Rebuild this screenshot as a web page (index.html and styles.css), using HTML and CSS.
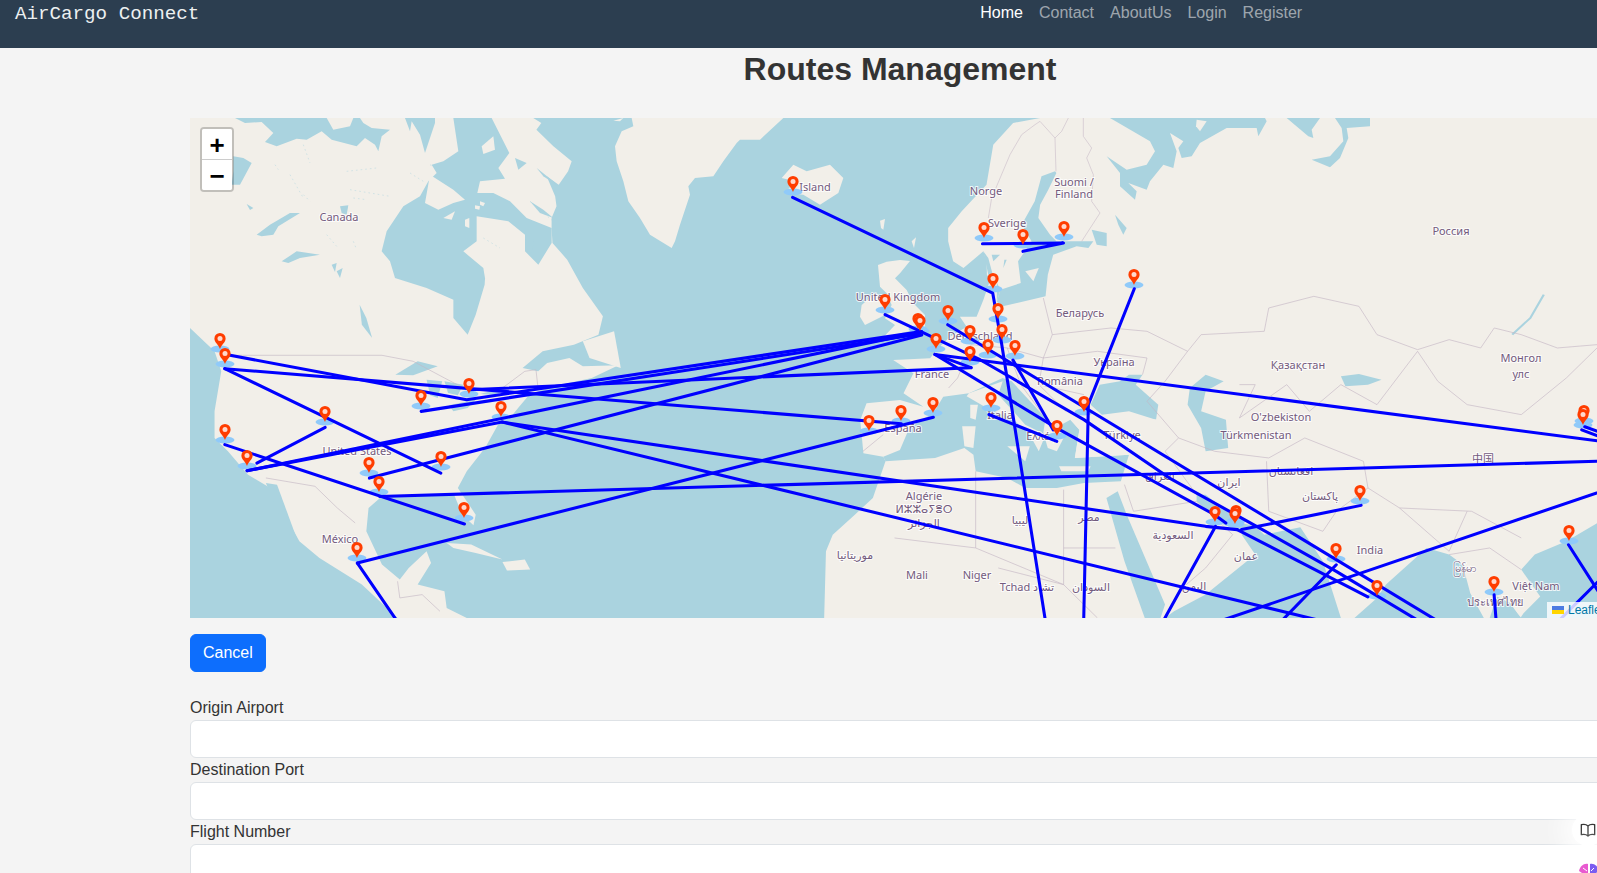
FILE: index.html
```html
<!DOCTYPE html>
<html lang="en">
<head>
  <meta charset="UTF-8">
  <meta name="viewport" content="width=device-width, initial-scale=1.0">
  <link rel="stylesheet" href="styles.css">
  <title>Routes Management</title>
</head>
<body>

  <nav class="navbar">
    <a class="brand" href="#">AirCargo Connect</a>
    <ul class="nav-links">
      <li><a class="active" href="#">Home</a></li>
      <li><a href="#">Contact</a></li>
      <li><a href="#">AboutUs</a></li>
      <li><a href="#">Login</a></li>
      <li><a href="#">Register</a></li>
    </ul>
  </nav>

  <main class="page">
    <h1 class="page-title">Routes Management</h1>

    <div class="map">
      <svg class="map-canvas" width="1420" height="500" viewBox="190 118 1420 500">
        <defs>
          <ellipse id="shadow" cx="0" cy="0" rx="9.5" ry="3.5"/>
          <g id="pin">
            <path d="M0 0C-1.5-4.5-5.6-6.5-5.6-10.5a5.6 5.6 0 0 1 11.2 0C5.6-6.5 1.5-4.5 0 0Z"/>
            <circle class="pin-hole" cx="0" cy="-10.5" r="2.5"/>
          </g>
        </defs>

        <!-- america, traced in 2.24 x 3 units -->
        <g transform="translate(190 118) scale(.4464 .3333)">
          <path class="land" d="M0 0L769 0 787 15 776 35 814 85 855 130 847 160 826 200 799 175 818 235 821 265 810 300 810 330 812 375 845 425 880 510 925 595 915 650 860 680 790 700 745 750 780 760 800 735 850 720 880 745 960 742 900 780 830 800 790 815 760 830 735 870 720 895 690 920 665 980 655 1000 620 1060 600 1110 640 1190 635 1222 610 1190 590 1125 560 1130 430 1135 400 1170 395 1240 430 1340 470 1385 490 1350 530 1300 540 1335 510 1400 570 1420 575 1470 620 1500 465 1500 385 1400 290 1320 245 1270 180 1110 130 1070 85 1000 55 960 55 880 70 760 55 700 0 630Z"/>
          <path class="water" d="M459 480L530 510 590 545 590 600 622 650 640 590 660 500 661 480Z"/>
          <path class="land" d="M880 670L950 640 965 750 895 720Z"/>
          <path class="land" d="M575 1275L630 1280 700 1325 640 1305 590 1290Z"/>
          <path class="land" d="M700 1332L750 1325 762 1355 710 1358Z"/>
          <path class="water" d="M170 1095L195 1100 240 1265 215 1240Z"/>
          <path class="water" d="M460 770L510 730 555 745 500 772Z"/>
          <path class="water" d="M530 785L565 790 555 840 538 832Z"/>
          <path class="water" d="M570 790L612 800 600 832 578 825Z"/>
          <path class="water" d="M580 862L640 845 622 870 590 880Z"/>
          <path class="water" d="M650 828L700 810 690 832Z"/>
          <path class="water" d="M380 560L395 600 408 660 385 620Z"/>
          <g class="borders">
            <path d="M70 712L430 712 500 730 570 780 620 815 700 810 750 760 775 755 780 815"/>
            <path d="M170 1080L280 1105 330 1170 370 1215"/>
            <path d="M465 1390L470 1440 520 1430 560 1480"/>
            <path d="M1425 1300L1525 1290 1568 1240M1525 1290L1530 1170"/>
          </g>
        </g>

        <!-- canadian arctic and north atlantic, traced 3x -->
        <g transform="translate(190 118) scale(.33333)">
          <path class="water" d="M135 0L165 15 215 12 250 45 225 72 260 85 320 62 350 65 395 40 425 65 500 85 525 60 555 80 565 100 575 55 600 35 545 30 520 15 510 0Z"/>
          <path class="land" d="M410 0L490 0 480 25 430 35Z"/>
          <path class="water" d="M645 0L660 40 665 10 690 50 705 105 720 60 735 15 735 0Z"/>
          <path class="water" d="M790 0L905 0 958 105 925 150 945 182 870 190 862 225 910 225 960 250 1010 300 1085 330 1085 375 1045 440 1005 400 1005 350 955 310 860 295 860 370 820 400 880 450 885 480 615 480 600 430 575 400 590 340 640 265 690 235 715 190 740 165 725 140 760 130 805 100Z"/>
          <path class="land" d="M720 170L790 215 825 245 790 255 745 275 705 255Z"/>
          <path class="land" d="M760 300L795 280 785 305Z"/>
          <path class="land" d="M825 305L838 300 838 330 825 325Z"/>
          <path class="land" d="M855 262L870 265 868 275 855 272Z"/>
          <path class="land" d="M870 250L885 255 880 265 870 260Z"/>
          <path class="land" d="M875 85L910 55 915 95 880 108Z"/>
          <path class="water" d="M975 120L1010 135 985 155Z"/>
          <path class="water" d="M1040 150L1090 190 1105 205 1060 175Z"/>
          <path class="water" d="M1020 250L1060 275 1090 300 1050 285Z"/>
          <path class="water" d="M200 350L240 320 300 285 330 285 265 325 250 350 215 355Z"/>
          <path class="water" d="M130 115L160 120 185 135 150 200 125 200 130 160Z"/>
          <path class="water" d="M275 430L320 400 390 410 330 420 295 435Z"/>
          <path class="water" d="M450 265L475 262 470 290 455 285Z"/>
          <path class="water" d="M170 258L190 270 180 276Z"/>
          <path class="water" d="M425 440L440 435 435 462Z"/>
          <path class="water" d="M440 460L458 450 450 480Z"/>
          <path class="water" d="M1005 365L1030 365 1028 405 1010 400Z"/>
          <g class="water-lines">
            <path d="M255 140L265 155M300 170L340 240M470 160L560 150M480 215L600 235M490 240L530 245M340 80L360 135M660 165L700 190M720 140L770 170M410 350L440 385M490 370L500 395M880 360L930 390M1020 250L1090 310M340 230L360 250"/>
          </g>
        </g>

        <g transform="translate(600 118) scale(.33333)">
          <path class="land" d="M95 0L100 25 65 40 45 85 50 130 70 190 85 250 120 300 150 350 215 390 225 370 240 320 270 230 265 205 285 180 340 175 370 130 410 75 420 65 480 65 550 0Z"/>
          <path class="land" d="M545 180L580 140 620 160 690 140 730 180 715 225 660 260 610 230 555 225 585 190Z"/>
          <path class="land" d="M40 8L70 0 60 10Z"/>
          <path class="land" d="M840 308L855 303 850 335 843 330Z"/>
          <path class="land" d="M935 370L948 358 942 390Z"/>
        </g>

        <!-- eurasia and africa, traced in 2.218 x 3 units -->
        <g transform="translate(890 118) scale(.4509 .3333)">
          <path class="land" d="M-146 1500L-142 1300-127 1250-78 1190-38 1140-10 1030-15 1016-59 1006-66 906-52 856 22 846 74 866 30 826 52 766 7 726 89 721 103 696 133 656 170 626 155 596 192 596 207 546 222 486 215 470 214 430 207 400 163 450 140 430 129 370 129 330 159 280 214 200 229 80 273 15 333 0 1600 0 1600 1190 1500 1270 1430 1310 1400 1355 1442 1436 1405 1486 1398 1500 1376 1456 1346 1436 1346 1500 1317 1500 1287 1426 1270 1340 1240 1310 1190 1290 1100 1400 1080 1440 1030 1500 1000 1500 960 1330 910 1228 830 1250 810 1225 780 1250 810 1310 700 1430 630 1480 610 1500Z"/>
          <path class="water" d="M207 400L218 420 228 470 245 515 237 551 237 496 218 470Z"/>
          <path class="water" d="M336 175L366 160 369 165 351 215 333 260 329 300 355 350 369 370 451 370 440 390 414 385 362 410 350 470 345 535 250 565 237 551 245 515 290 495 284 430 314 370 292 320 321 250Z"/>
          <path class="land" d="M300 460L330 450 318 490Z"/>
          <path class="water" d="M445 860L465 800 510 790 530 770 560 770 545 800 595 860 590 905 530 880 470 890Z"/>
          <path class="water" d="M665 810L700 770 740 790 700 820 690 880 745 905 750 990 700 1000 690 930 660 860Z"/>
          <path class="water" d="M1000 775L1040 768 1090 785 1060 800 1010 805Z"/>
          <path class="water" d="M1330 1500L1345 1440 1375 1460 1400 1500Z"/>
          <path class="water" d="M118 836L175 826 250 780 270 790 345 900 380 920 400 905 420 935 410 1020 530 1010 512 1090 430 1095 370 1110 300 1110 260 1080 190 1060 185 1010 165 990 100 1020-10 1030-15 1016 22 996 44 926 96 886Z"/>
          <path class="water" d="M480 1140L505 1120 525 1190 610 1460 600 1500 565 1500 520 1330Z"/>
          <path class="water" d="M680 1130L700 1130 780 1215 810 1225 790 1250 760 1230 740 1220 680 1150Z"/>
          <path class="water-stroke" d="M1380 650L1420 600 1450 530"/>
          <path class="land" d="M175 826L250 790 240 830 300 920 345 950 330 1000 310 950 270 900 215 870 170 835Z"/>
          <path class="land" d="M345 900L380 920 385 960 370 1000 350 990 340 945Z"/>
          <path class="land" d="M400 905L560 900 595 905 610 930 590 1000 530 1010 410 1020 420 935Z"/>
          <path class="land" d="M260 985L310 985 300 1030Z"/>
          <path class="land" d="M160 925L190 925 185 990 165 985Z"/>
          <path class="land" d="M178 860L195 860 190 905 178 900Z"/>
          <path class="land" d="M375 1045L445 1045 440 1060 380 1060Z"/>
          <g class="borders">
            <path d="M660 700L690 650 830 640 840 570 940 535 1040 565 1080 650 1170 695 1240 665 1310 690 1340 630 1400 650 1480 690 1568 680"/>
            <path d="M1170 700L1215 790 1280 860 1400 890 1500 780 1568 690"/>
            <path d="M775 800L810 800 775 900 880 800 930 880 1000 800 1080 860 1170 700"/>
            <path d="M840 1020L920 960 1050 1030 1060 1110 1130 1170 1290 1180 1400 1260M1060 1110L990 1180 960 1240 840 1180 835 1030"/>
            <path d="M1130 1170L1240 1300 1280 1180M1240 1310L1330 1290 1400 1355"/>
            <path d="M660 700L610 790 570 850 640 960 610 1000 680 1130M640 960L720 1000 840 1020"/>
            <path d="M340 540L360 650 340 720 460 700 570 720 560 770M360 650L490 630 570 640 660 700"/>
            <path d="M180 680L260 690 340 720 330 800 430 830M180 680L150 780 130 810M260 690L290 800 345 900M330 800L390 880"/>
            <path d="M385 1115L385 1290 500 1290M190 1060L190 1290 385 1400 385 1290M10 1260L190 1290M240 1350L385 1400 460 1500"/>
            <path d="M520 1100L540 1180 680 1150 760 1250 700 1350 640 1420M-60 1000L-15 950"/>
          </g>
        </g>

        <!-- britain and ireland, traced 3x -->
        <g transform="translate(850 260) scale(.33333)">
          <path class="land" d="M84 15L110 5 150 0 180 3 150 40 135 55 170 90 190 130 225 165 225 205 170 215 100 232 135 195 105 175 125 135 110 100 90 80Z"/>
          <path class="land" d="M35 135L75 100 100 115 105 165 45 195 30 170Z"/>
        </g>

        <!-- russian north and scandinavia, traced 3x -->
        <g transform="translate(950 118) scale(.33333)">
          <path class="water" d="M480 0L600 70 615 100 590 140 530 155 470 115 510 165 510 205 555 245 560 220 535 195 590 215 600 190 640 140 670 150 680 100 660 45 700 70 685 90 695 120 725 115 750 75 830 30 920 30 925 55 950 10 945 0Z"/>
          <path class="land" d="M740 5L770 10 750 40 738 25Z"/>
          <path class="water" d="M1010 0L1075 55 1090 60 1085 35 1110 0Z"/>
          <path class="water" d="M1155 0L1175 30 1180 70 1140 115 1085 125 1140 148 1170 120 1195 60 1190 30 1260 25 1260 0Z"/>
          <path class="water" d="M425 335L470 345 470 385 440 380Z"/>
          <path class="water" d="M495 290L530 330 520 350 505 320Z"/>
          <path class="water" d="M125 410L150 410 130 430Z"/>
          <path class="water" d="M163 425L170 425 160 450Z"/>
          <g class="borders">
            <path d="M115 300L125 240 180 110 215 50 255 20 270 10 315 60 318 160M315 60L335 40 355 0M400 0L400 55 425 90 410 120 430 170 425 250 450 285 395 370"/>
          </g>
        </g>

        <g class="labels">
          <text x="339" y="221">Canada</text>
          <text x="815" y="191">Island</text>
          <text x="898" y="301">United Kingdom</text>
          <text x="357" y="455">United States</text>
          <text x="340" y="543">México</text>
          <text x="986" y="195">Norge</text>
          <text x="1074" y="186">Suomi /</text>
          <text x="1074" y="198">Finland</text>
          <text x="1007" y="227">Sverige</text>
          <text x="1451" y="235">Россия</text>
          <text x="1080" y="317">Беларусь</text>
          <text x="980" y="340">Deutschland</text>
          <text x="932" y="378">France</text>
          <text x="1060" y="385">România</text>
          <text x="1114" y="366">Україна</text>
          <text x="1298" y="369">Қазақстан</text>
          <text x="1521" y="362">Монгол</text>
          <text x="1521" y="378">улс</text>
          <text x="1000" y="419">Italia</text>
          <text x="903" y="432">España</text>
          <text x="1041" y="440">Ελλάς</text>
          <text x="1122" y="439">Türkiye</text>
          <text x="1281" y="421">O'zbekiston</text>
          <text x="1256" y="439">Türkmenistan</text>
          <text x="1483" y="463" class="cjk">中国</text>
          <text x="1229" y="486">ایران</text>
          <text x="1320" y="500">پاکستان</text>
          <text x="1370" y="554">India</text>
          <text x="1291" y="475">افغانستان</text>
          <text x="1160" y="480">العراق</text>
          <text x="1173" y="539">السعودية</text>
          <text x="1246" y="560">عمان</text>
          <text x="1089" y="521">مصر</text>
          <text x="1020" y="524">ليبيا</text>
          <text x="924" y="500">Algérie</text>
          <text x="924" y="513">ⵍⵣⵣⴰⵢⴻⵔ</text>
          <text x="924" y="527">الجزائر</text>
          <text x="855" y="559">موريتانيا</text>
          <text x="917" y="579">Mali</text>
          <text x="977" y="579">Niger</text>
          <text x="1027" y="591">Tchad تشاد</text>
          <text x="1091" y="591">السودان</text>
          <text x="1194" y="590">اليمن</text>
          <text x="1536" y="590">Việt Nam</text>
          <text x="1495" y="606">ประเทศไทย</text>
          <text x="1464" y="572">မြန်မာ</text>
        </g>

        <g class="shadows" transform="translate(0 1)">
          <use href="#shadow" x="793" y="191"/><use href="#shadow" x="220" y="348"/><use href="#shadow" x="225" y="363"/>
          <use href="#shadow" x="469" y="393"/><use href="#shadow" x="421" y="405"/><use href="#shadow" x="501" y="416"/>
          <use href="#shadow" x="325" y="421"/><use href="#shadow" x="225" y="439"/><use href="#shadow" x="247" y="465"/>
          <use href="#shadow" x="369" y="472"/><use href="#shadow" x="441" y="466"/><use href="#shadow" x="379" y="491"/>
          <use href="#shadow" x="464" y="517"/><use href="#shadow" x="357" y="557"/><use href="#shadow" x="869" y="430"/>
          <use href="#shadow" x="885" y="309"/><use href="#shadow" x="984" y="237"/><use href="#shadow" x="1023" y="244"/>
          <use href="#shadow" x="1064" y="236"/><use href="#shadow" x="993" y="288"/><use href="#shadow" x="1134" y="284"/>
          <use href="#shadow" x="998" y="318"/><use href="#shadow" x="948" y="320"/><use href="#shadow" x="918" y="328"/>
          <use href="#shadow" x="920" y="330"/><use href="#shadow" x="970" y="340"/><use href="#shadow" x="1002" y="339"/>
          <use href="#shadow" x="936" y="348"/><use href="#shadow" x="988" y="354"/><use href="#shadow" x="1015" y="355"/>
          <use href="#shadow" x="970" y="361"/><use href="#shadow" x="901" y="420"/><use href="#shadow" x="933" y="412"/>
          <use href="#shadow" x="991" y="407"/><use href="#shadow" x="1084" y="411"/><use href="#shadow" x="1057" y="435"/>
          <use href="#shadow" x="1215" y="521"/><use href="#shadow" x="1236" y="520"/><use href="#shadow" x="1235" y="523"/>
          <use href="#shadow" x="1360" y="500"/><use href="#shadow" x="1336" y="558"/><use href="#shadow" x="1377" y="595"/>
          <use href="#shadow" x="1494" y="591"/><use href="#shadow" x="1569" y="540"/><use href="#shadow" x="1584" y="420"/>
          <use href="#shadow" x="1583" y="424"/>
        </g>

        <g class="routes" transform="scale(1.01849)">
          <polyline points="778.2,193.8 974.7,287.7 983.6,338.5 1026.5,610"/>
          <polyline points="219.4,347.6 458.2,392.5 904.8,325.4"/>
          <polyline points="220.7,362 885,416"/>
          <polyline points="220.7,362 432.8,464.5"/>
          <polyline points="413.5,403.9 903,328"/>
          <polyline points="460.4,382.7 953.5,361"/>
          <polyline points="362.7,469.4 905,329"/>
          <polyline points="242.6,462.2 905,326"/>
          <polyline points="242.6,462.2 493,414.4 1183.7,516.8 1214.7,520"/>
          <polyline points="493,414.4 1295,609"/>
          <polyline points="252.2,454.7 319.3,419.6"/>
          <polyline points="220.7,436.6 456,514.5"/>
          <polyline points="372.8,487.4 1600,452"/>
          <polyline points="350.9,552.8 916.4,409.7"/>
          <polyline points="350.9,552.8 390,610"/>
          <polyline points="930.5,318.8 1412,610"/>
          <polyline points="869,309 962.3,353.2 1064.2,412 1148.3,469.4 1228,513.6 1312,561 1392,609"/>
          <polyline points="918,348 1037.6,420.3 1192.5,505.4 1203.6,513.6"/>
          <polyline points="918,348 1600,437"/>
          <polyline points="918,348 953.5,361"/>
          <polyline points="994.6,353.5 1034,422"/>
          <polyline points="971,407 1037.6,433.4"/>
          <polyline points="1113.7,283.5 1068.6,397 1064,610"/>
          <polyline points="964.6,239.3 1044.2,238.6 1004.4,246.8"/>
          <polyline points="1336.4,496.2 1219,520"/>
          <polyline points="1312,554.5 1258,610"/>
          <polyline points="1193.4,516.9 1142,610"/>
          <polyline points="1600,473 1200,609"/>
          <polyline points="1214.7,520 1343,586"/>
          <polyline points="1540,534.9 1572,585"/>
          <polyline points="1572,568 1530,610"/>
          <polyline points="1467,584 1469,610"/>
          <polyline points="1553,422 1600,440"/>
          <polyline points="1556,419 1600,435"/>
        </g>

        <g class="pins" transform="translate(0 1)">
          <use href="#pin" x="793" y="191"/><use href="#pin" x="220" y="348"/><use href="#pin" x="225" y="363"/>
          <use href="#pin" x="469" y="393"/><use href="#pin" x="421" y="405"/><use href="#pin" x="501" y="416"/>
          <use href="#pin" x="325" y="421"/><use href="#pin" x="225" y="439"/><use href="#pin" x="247" y="465"/>
          <use href="#pin" x="369" y="472"/><use href="#pin" x="441" y="466"/><use href="#pin" x="379" y="491"/>
          <use href="#pin" x="464" y="517"/><use href="#pin" x="357" y="557"/><use href="#pin" x="869" y="430"/>
          <use href="#pin" x="885" y="309"/><use href="#pin" x="984" y="237"/><use href="#pin" x="1023" y="244"/>
          <use href="#pin" x="1064" y="236"/><use href="#pin" x="993" y="288"/><use href="#pin" x="1134" y="284"/>
          <use href="#pin" x="998" y="318"/><use href="#pin" x="948" y="320"/><use href="#pin" x="918" y="328"/>
          <use href="#pin" x="920" y="330"/><use href="#pin" x="970" y="340"/><use href="#pin" x="1002" y="339"/>
          <use href="#pin" x="936" y="348"/><use href="#pin" x="988" y="354"/><use href="#pin" x="1015" y="355"/>
          <use href="#pin" x="970" y="361"/><use href="#pin" x="901" y="420"/><use href="#pin" x="933" y="412"/>
          <use href="#pin" x="991" y="407"/><use href="#pin" x="1084" y="411"/><use href="#pin" x="1057" y="435"/>
          <use href="#pin" x="1215" y="521"/><use href="#pin" x="1236" y="520"/><use href="#pin" x="1235" y="523"/>
          <use href="#pin" x="1360" y="500"/><use href="#pin" x="1336" y="558"/><use href="#pin" x="1377" y="595"/>
          <use href="#pin" x="1494" y="591"/><use href="#pin" x="1569" y="540"/><use href="#pin" x="1584" y="420"/>
          <use href="#pin" x="1583" y="424"/>
        </g>
      </svg>

      <div class="zoom-control">
        <a class="zoom-btn" href="#">+</a>
        <a class="zoom-btn" href="#">&#x2212;</a>
      </div>

      <div class="attribution">
        <svg class="flag" width="12" height="8" viewBox="0 0 12 8"><rect width="12" height="4" fill="#4c7be1"/><rect y="4" width="12" height="4" fill="#ffd500"/></svg>
        <a href="#">Leaflet</a>
      </div>
    </div>

    <button class="btn-cancel">Cancel</button>

    <form class="route-form">
      <label for="origin">Origin Airport</label>
      <input type="text" id="origin">
      <label for="destination">Destination Port</label>
      <input type="text" id="destination">
      <label for="flight">Flight Number</label>
      <input type="text" id="flight">
    </form>
  </main>

  <div class="float-btn float-book">
    <svg width="16" height="16" viewBox="0 0 24 24"><path d="M12 6C10 4 6 3 2 4v15c4-1 8 0 10 2 2-2 6-3 10-2V4c-4-1-8 0-10 2Zm0 0v15" fill="none" stroke="#333" stroke-width="2" stroke-linejoin="round"/></svg>
  </div>
  <div class="float-btn float-brain">
    <svg width="22" height="18" viewBox="0 0 22 18"><path d="M10 1C6 0 2 3 1 8l9 6Z" fill="#e85ad0"/><path d="M12 1c4-1 8 2 9 7l-9 6Z" fill="#7a5cf0"/><path d="M5 5l4 3M16 5l-3 3" stroke="#fff" fill="none"/></svg>
  </div>

</body>
</html>
```

FILE: styles.css
```css
body {
  margin: 0;
  background-color: #f4f4f4;
  color: #333;
  font-family: "Liberation Sans", Arial, sans-serif;
  font-size: 16px;
  line-height: 24px;
  overflow: hidden;
}

.navbar {
  display: flex;
  align-items: flex-start;
  height: 48px;
  padding-left: 15px;
  background-color: #2c3e50;
}

.brand {
  font-family: "Liberation Mono", "Courier New", monospace;
  font-size: 19.2px;
  line-height: 28px;
  color: #ecf0f1;
  text-decoration: none;
}

.nav-links {
  display: flex;
  gap: 16px;
  margin: 0 0 0 781px;
  padding: 1px 0 0;
  list-style: none;
}

.nav-links a {
  color: rgba(255, 255, 255, 0.55);
  text-decoration: none;
}

.nav-links a.active {
  color: #fff;
}

.page {
  width: 1420px;
  margin-left: 190px;
}

.page-title {
  margin: 2px 0 30px;
  font-size: 32px;
  line-height: 38px;
  text-align: center;
}

.map {
  position: relative;
  height: 500px;
  overflow: hidden;
  background-color: #aad3df;
}

.map-canvas {
  display: block;
}

.land {
  fill: #f2efe9;
}

.water {
  fill: #aad3df;
}

.water-stroke {
  fill: none;
  stroke: #aad3df;
  stroke-width: 5;
}

.water-lines path {
  fill: none;
  stroke: #aad3df;
  stroke-width: 2;
  stroke-dasharray: 5 9;
  opacity: 0.7;
}

.borders path {
  fill: none;
  stroke: #c4b6c4;
  stroke-width: 1.6;
}

.labels text {
  font-family: "Noto Sans", "DejaVu Sans", sans-serif;
  font-size: 11px;
  fill: #735a7d;
  stroke: rgba(255, 255, 255, 0.8);
  stroke-width: 2px;
  paint-order: stroke;
  text-anchor: middle;
}

.labels .cjk {
  font-family: "Noto Sans CJK SC", sans-serif;
}

.shadows use {
  fill: #90caf9;
}

.routes polyline {
  fill: none;
  stroke: #0000ff;
  stroke-width: 3;
  stroke-linecap: round;
  stroke-linejoin: round;
}

.pins use {
  fill: #ff3d00;
}

.pin-hole {
  fill: rgba(255, 255, 255, 0.8);
}

.zoom-control {
  position: absolute;
  top: 9px;
  left: 10px;
  width: 30px;
  border: 2px solid rgba(0, 0, 0, 0.2);
  border-radius: 4px;
  background-clip: padding-box;
}

.zoom-btn {
  display: block;
  height: 30px;
  background-color: #fff;
  color: #000;
  font-family: "Liberation Sans", sans-serif;
  font-size: 26px;
  font-weight: bold;
  line-height: 32px;
  text-align: center;
  text-decoration: none;
}

.zoom-btn:first-child {
  border-bottom: 1px solid #ccc;
  border-radius: 2px 2px 0 0;
}

.zoom-btn:last-child {
  border-radius: 0 0 2px 2px;
}

.attribution {
  position: absolute;
  right: 0;
  bottom: 0;
  display: flex;
  align-items: center;
  gap: 4px;
  width: 58px;
  height: 16px;
  padding-left: 5px;
  background-color: rgba(255, 255, 255, 0.8);
  font-size: 12px;
  line-height: 16px;
}

.attribution a {
  color: #0078a8;
  text-decoration: none;
}

.btn-cancel {
  display: block;
  height: 38px;
  margin: 16px 0 24px;
  padding: 6px 12px;
  border: 1px solid #0d6efd;
  border-radius: 6px;
  background-color: #0d6efd;
  color: #fff;
  font-family: inherit;
  font-size: 16px;
  line-height: 24px;
}

.route-form label {
  display: block;
  height: 24px;
}

.route-form input {
  display: block;
  box-sizing: border-box;
  width: 100%;
  height: 38px;
  border: 1px solid #dee2e6;
  border-radius: 6px;
  background-color: #fff;
}

.float-btn {
  position: fixed;
  display: flex;
  justify-content: center;
  border-radius: 50%;
  background-color: #fff;
  box-shadow: 0 0 26px 10px rgba(255, 255, 255, 0.9);
}

.float-book {
  top: 814px;
  left: 1572px;
  width: 32px;
  height: 32px;
  align-items: center;
}

.float-brain {
  top: 855px;
  left: 1569px;
  width: 40px;
  height: 40px;
  padding-top: 8px;
  box-sizing: border-box;
}
```
